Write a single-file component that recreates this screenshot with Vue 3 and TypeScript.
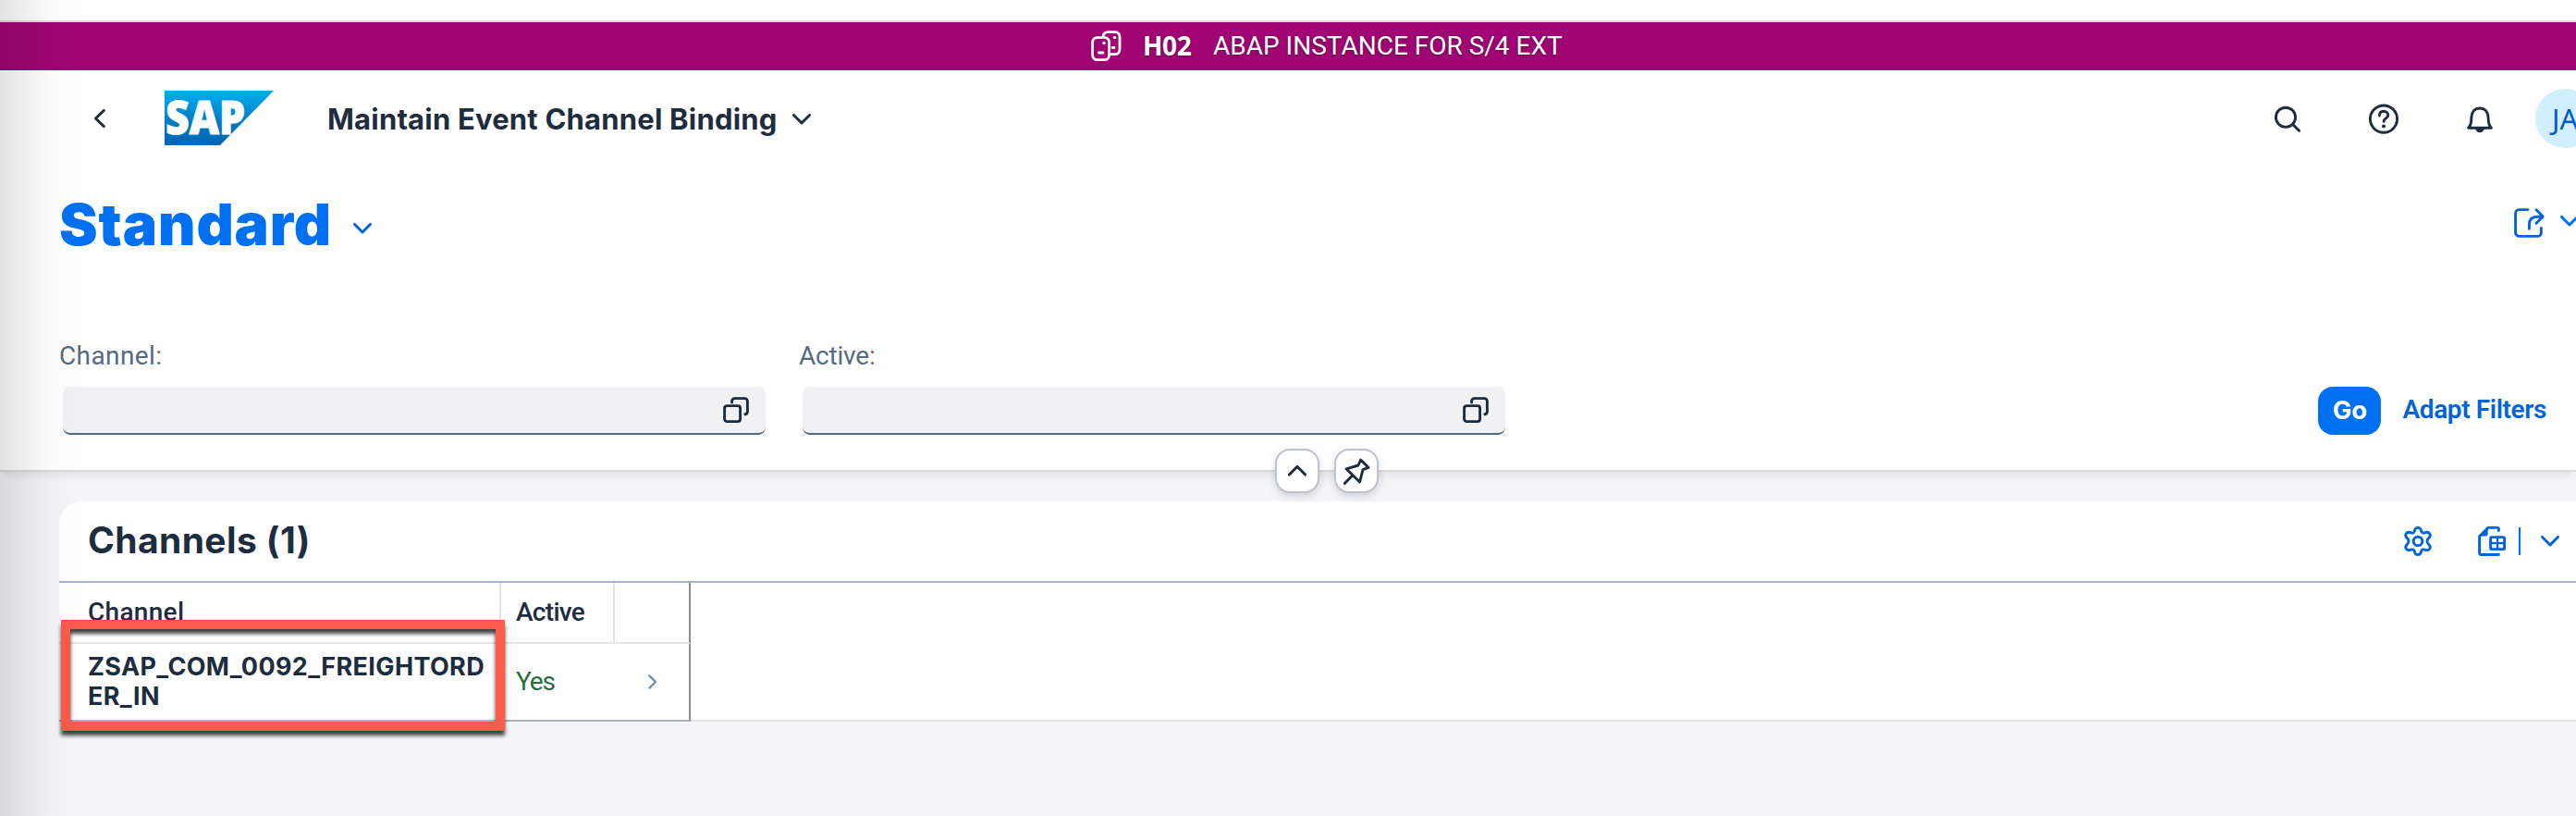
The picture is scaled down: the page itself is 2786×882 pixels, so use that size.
<script setup lang="ts">
interface Filter { label: string; cls: string }
interface Channel { lines: string[]; active: string }

const system = { id: 'H02', name: 'ABAP INSTANCE FOR S/4 EXT' }
const filters: Filter[] = [
  { label: 'Channel:', cls: 'channel' },
  { label: 'Active:', cls: 'active' },
]
const channels: Channel[] = [{ lines: ['ZSAP_COM_0092_FREIGHTORD', 'ER_IN'], active: 'Yes' }]
</script>

<template>
  <div class="page">
    <div class="strip"></div>
    <div class="banner">
      <svg class="sys-icon" width="36" height="36" viewBox="0 0 36 36">
        <rect x="2.6" y="8.6" width="18" height="24" rx="5" />
        <path d="M14 8.4 V7.6 A5 5 0 0 1 19 2.6 H27 A5 5 0 0 1 32 7.6 V21.6 A5 5 0 0 1 27 26.6 H21" />
        <path d="M9.5 25 H14 M24 19.5 H26" />
        <circle cx="15" cy="14.5" r="1.8" class="dot" />
        <circle cx="26.5" cy="8.5" r="1.8" class="dot" />
      </svg>
      <strong class="sys-id">{{ system.id }}</strong>
      <span class="sys-name">{{ system.name }}</span>
    </div>

    <header class="shell">
      <svg class="back" width="16" height="22" viewBox="0 0 16 22"><path d="M12.4 2.4 L3.4 11 L12.4 19.6" /></svg>
      <svg class="logo" width="118" height="59" viewBox="0 0 118 59">
        <defs>
          <linearGradient id="sapfill" x1="0" y1="0" x2="0" y2="1">
            <stop offset="0" stop-color="#00aeef" />
            <stop offset="0.25" stop-color="#0099dd" />
            <stop offset="0.55" stop-color="#007cc5" />
            <stop offset="1" stop-color="#0064b1" />
          </linearGradient>
        </defs>
        <path class="logo-shape" d="M0 0 H118 L60 59 H0 Z" fill="url(#sapfill)" />
        <text class="logo-text" x="1" y="47" textLength="86" lengthAdjust="spacingAndGlyphs">SAP</text>
      </svg>
      <h1 class="app-title">Maintain Event Channel Binding</h1>
      <svg class="chev dark" width="24" height="16" viewBox="0 0 24 16"><path d="M3.5 3.4 L12 12 L20.5 3.4" /></svg>

      <div class="shell-tools">
        <svg width="32" height="32" viewBox="0 0 32 32">
          <circle cx="14" cy="14.8" r="10.6" /><path d="M21.8 22.6 L28.6 29.2" />
        </svg>
        <svg width="34" height="34" viewBox="0 0 34 34">
          <circle cx="17" cy="17.6" r="14.6" />
          <path d="M12.4 14 C12.4 10.9 14.4 9.3 17.1 9.3 C19.9 9.3 21.8 11 21.8 13.5 C21.8 16.8 17.1 16.6 17.1 20.4" />
          <circle cx="17" cy="25.6" r="2" class="solid" />
        </svg>
        <svg width="32" height="32" viewBox="0 0 32 32">
          <path d="M3.6 26.2 C6.4 23.4 6.6 21 7 14.4 C7.3 8.6 10.8 5 16 5 C21.2 5 24.7 8.6 25 14.4 C25.4 21 25.6 23.4 28.4 26.2 Z" />
          <path d="M11 26.4 H21 C20.4 29.6 18.6 31.2 16 31.2 C13.4 31.2 11.6 29.6 11 26.4 Z" class="solid" />
        </svg>
        <div class="avatar">JA</div>
      </div>
    </header>

    <section class="title-row">
      <h2 class="variant">Standard</h2>
      <svg class="chev blue" width="24" height="16" viewBox="0 0 24 16"><path d="M3.5 3.4 L12 12 L20.5 3.4" /></svg>
      <svg class="share blue" width="36" height="36" viewBox="0 0 36 36">
        <path d="M17 4.6 H7.6 A4 4 0 0 0 3.6 8.6 V29.6 A4 4 0 0 0 7.6 33.4 H27.4 A4 4 0 0 0 31.4 29.4 V24.4" />
        <path d="M18.4 25.4 V21 C18.4 15.2 21.2 12.2 27 12.2 H32.4 M26 4.8 L33.2 12.1 L26 19.2" />
      </svg>
      <svg class="chev blue share-chev" width="24" height="16" viewBox="0 0 24 16"><path d="M3.5 3.4 L12 12 L20.5 3.4" /></svg>
    </section>

    <section class="filters">
      <div v-for="f in filters" :key="f.label" class="field">
        <label :class="f.cls">{{ f.label }}</label>
        <div class="input">
          <svg width="32" height="32" viewBox="0 0 32 32">
            <rect x="3.6" y="11.6" width="17" height="17" rx="2.6" />
            <path d="M11.6 8 V6.6 A3 3 0 0 1 14.6 3.6 H25.4 A3 3 0 0 1 28.4 6.6 V18.4 A3 3 0 0 1 25.8 20.8" />
          </svg>
        </div>
      </div>
      <div class="filter-actions">
        <button class="go">Go</button>
        <a class="adapt">Adapt Filters</a>
      </div>
      <div class="snap">
        <button><svg width="28" height="28" viewBox="0 0 28 28"><path d="M5.4 18 L14 9.2 L22.6 18" /></svg></button>
        <button>
          <svg width="32" height="32" viewBox="0 0 32 32">
            <path d="M20.6 4 L29 12.4 L23 14.6 L19.6 28 L5 13.8 L18 10 Z M12 20.8 L3.4 29.4" />
          </svg>
        </button>
      </div>
    </section>

    <main class="content">
      <div class="panel">
        <div class="toolbar">
          <h3>Channels (1)</h3>
          <svg class="gear blue" width="34" height="36" viewBox="0 0 34 36">
            <path d="M17 3.4 C19.4 3.4 20.2 5 20.6 6.8 C21.1 8.9 22.6 9.6 24.4 8.9 C26.4 8.1 28.5 7.7 29.8 9.9 C31.1 12.2 29.9 13.6 28.4 14.9 C26.5 16.5 26.5 19.5 28.4 21.1 C29.9 22.4 31.1 23.8 29.8 26.1 C28.5 28.3 26.4 27.9 24.4 27.1 C22.6 26.4 21.1 27.1 20.6 29.2 C20.2 31 19.4 32.6 17 32.6 C14.6 32.6 13.8 31 13.4 29.2 C12.9 27.1 11.4 26.4 9.6 27.1 C7.6 27.9 5.5 28.3 4.2 26.1 C2.9 23.8 4.1 22.4 5.6 21.1 C7.5 19.5 7.5 16.5 5.6 14.9 C4.1 13.6 2.9 12.2 4.2 9.9 C5.5 7.7 7.6 8.1 9.6 8.9 C11.4 9.6 12.9 8.9 13.4 6.8 C13.8 5 14.6 3.4 17 3.4 Z" />
            <circle cx="17" cy="18" r="4.8" />
          </svg>
          <svg class="export blue" width="34" height="36" viewBox="0 0 34 36">
            <path d="M24.4 6.6 V4.8 A1.4 1.4 0 0 0 23 3.4 H13 L3.6 12.8 V31 A1.6 1.6 0 0 0 5.2 32.5 H24.4" />
            <path d="M12.6 4.4 V10.4 A2 2 0 0 1 10.6 12.4 H4.6 Z" class="solid" />
            <rect x="15.6" y="13.6" width="15" height="13" rx="1.4" />
            <path class="thin" d="M23.1 13.6 V26.6 M15.6 20.1 H30.6" />
          </svg>
          <span class="divider"></span>
          <svg class="chev blue" width="24" height="16" viewBox="0 0 24 16"><path d="M3.5 3.4 L12 12 L20.5 3.4" /></svg>
        </div>

        <div class="table">
          <div class="row head">
            <div class="cell c1">Channel</div>
            <div class="cell c2">Active</div>
            <div class="cell c3"></div>
          </div>
          <div v-for="c in channels" :key="c.lines[0]" class="row data">
            <div class="cell c1">
              <span v-for="l in c.lines" :key="l">{{ l }}</span>
              <div class="mark"></div>
            </div>
            <div class="cell c2">{{ c.active }}</div>
            <div class="cell c3">
              <svg width="14" height="20" viewBox="0 0 14 20"><path d="M3.4 3.4 L10 10 L3.4 16.6" /></svg>
            </div>
          </div>
        </div>
      </div>
    </main>
    <div class="edge"></div>
  </div>
</template>

<style>
body { margin: 0; }
</style>

<style scoped>
.page {
  position: relative;
  width: 2786px;
  height: 882px;
  overflow: hidden;
  display: flex;
  flex-direction: column;
  background: #fff;
  color: #1d2d3e;
  font: 400 28px/32px Roboto, 'Noto Sans', sans-serif;
  white-space: nowrap;
}
h1, h2, h3 { margin: 0; font-family: Inter, sans-serif; }
svg { display: block; flex: none; fill: none; stroke: #1d2d3e; stroke-width: 2.9; stroke-linecap: round; stroke-linejoin: round; }
svg.blue { stroke: #0064d9; }
.solid { fill: #1d2d3e; stroke: none; }
.blue .solid { fill: #0064d9; }

.strip { height: 22px; flex: none; border-bottom: 2px solid #dfe1e0; }
.banner { flex: none; height: 52px; display: flex; align-items: center; padding-left: 1179px; background: #a00573; color: #fff; text-shadow: 0 1px 3px rgba(0, 0, 0, 0.4); }
svg.sys-icon { stroke: #fff; stroke-width: 2.8; }
.dot { fill: #fff; stroke: none; }
.sys-id { width: 76px; margin-left: 21px; padding-bottom: 3px; font: 700 28px/32px 'Noto Sans', sans-serif; letter-spacing: -0.4px; }

.shell { flex: none; height: 104px; display: flex; align-items: center; padding-left: 100px; }
.logo { margin-left: 62px; margin-top: -1px; }
.logo-shape { stroke: none; }
.logo-text { font: 900 49px 'Noto Sans', sans-serif; fill: #fff; stroke: #fff; stroke-width: 1; }
.app-title { width: 501px; margin-left: 58px; padding-top: 1px; font-size: 31px; line-height: 40px; font-weight: 700; letter-spacing: 0.2px; }
.shell .chev { margin-top: 2px; }
.shell-tools { margin-left: auto; display: flex; align-items: center; }
.shell-tools svg:nth-child(2) { margin-left: 71px; margin-right: 71px; }
.avatar { width: 64px; height: 64px; box-sizing: border-box; margin: 0 -20px 0 44px; padding-left: 18px; border-radius: 50%; background: #d1efff; color: #0057d2; font: 400 31px/64px 'Noto Sans', sans-serif; }

.title-row { flex: none; height: 84px; margin-top: 18px; display: flex; align-items: center; padding-left: 64px; }
.variant { width: 316px; padding-top: 3px; font-size: 62.5px; line-height: 84px; font-weight: 900; letter-spacing: 0.9px; color: #0070f2; }
.title-row .chev { margin-top: 13px; }
.share { margin-left: auto; }
.title-row .share-chev { margin: -2px -6px 0 14px; transform: none; stroke: #0070f2; }
.title-row { padding-right: 1px; }

.filters { position: relative; flex: none; height: 139px; margin-top: 87px; border-bottom: 2px solid #d9d9d9; display: flex; gap: 40px; padding-left: 68px; box-shadow: 0 8px 8px -4px rgba(60, 70, 90, 0.1); z-index: 1; }
.field { width: 760px; }
label { display: block; margin-left: -4px; height: 33px; line-height: 32px; color: #556b82; letter-spacing: 0.4px; }
label.active { letter-spacing: -0.2px; }
.input { height: 50px; margin-top: 16px; border-bottom: 2px solid #556b82; border-radius: 8px; background: #eff1f2; display: flex; align-items: center; justify-content: flex-end; padding-right: 16px; }
.filter-actions { margin-left: auto; margin-top: 49px; height: 52px; display: flex; align-items: center; padding-right: 31px; }
.go { width: 68px; height: 52px; margin-right: 23px; padding: 0 0 2px; border: 0; border-radius: 16px; background: #0070f2; color: #fff; font: 700 27.5px/40px Inter, sans-serif; }
.adapt { color: #0064d9; font-weight: 600; letter-spacing: -0.38px; padding: 0 1px 2px 0; }
.snap { position: absolute; left: 1379px; top: 116px; display: flex; gap: 16px; }
.snap button { box-sizing: border-box; width: 48px; height: 48px; padding: 0; display: flex; align-items: center; justify-content: center; border: 2px solid #bcc3ca; border-radius: 16px; background: #fff; box-shadow: 0 3px 8px rgba(85, 107, 130, 0.25); }

.content { flex: 1; background: #f4f5f7; padding: 32px 0 0 64px; }
.toolbar { height: 86px; display: flex; align-items: center; background: #fff; border-bottom: 2px solid #a8b3bf; border-top-left-radius: 24px; padding: 0 16px 0 31px; }
.toolbar h3 { padding-bottom: 2px; font-size: 39px; line-height: 50px; font-weight: 700; letter-spacing: 0.4px; }
.gear { margin-left: auto; }
.export { margin-left: 46px; }
.export .thin { stroke-width: 2.2; }
.divider { width: 2px; height: 30px; margin: 0 20px 0 12px; background: #0070f2; }

.table { height: 148px; background: #fff; border-bottom: 2px solid #e5e5e5; }
.row { width: 683px; box-sizing: border-box; display: flex; border-right: 2px solid #8c8f93; border-bottom: 2px solid #e5e5e5; }
.head { height: 66px; font-weight: 500; }
.data { height: 84px; border-bottom-color: #a8b3bf; }
.cell { box-sizing: border-box; display: flex; align-items: center; }
.c1 { position: relative; width: 478px; padding-left: 31px; }
.c2 { width: 123px; padding-left: 16px; }
.c3 { flex: 1; }
.head .c1 { border-right: 2px solid #e5e5e5; letter-spacing: 0.3px; }
.head .c2 { border-right: 2px solid #e5e5e5; letter-spacing: -0.7px; }
.data .c1 { flex-direction: column; align-items: flex-start; justify-content: center; font: 700 27px/32px Inter, sans-serif; letter-spacing: 0.35px; }
.data .c2 { color: #256f3a; letter-spacing: -1.2px; padding-bottom: 1px; }
.data .c3 svg { margin-left: 34px; stroke: #6f8fae; stroke-width: 2.4; }
.mark { position: absolute; left: 2px; top: -26px; width: 480px; height: 120px; box-sizing: border-box; border: 10px solid #ff5a4b; z-index: 2; filter: drop-shadow(0 5px 2px rgba(0, 0, 0, 0.75)); }
.edge { position: absolute; left: 0; top: 0; width: 88px; height: 100%; z-index: 3; background: linear-gradient(90deg, rgba(0, 0, 0, 0.115), rgba(0, 0, 0, 0.07) 27%, rgba(0, 0, 0, 0.02) 60%, rgba(0, 0, 0, 0)); }
</style>
